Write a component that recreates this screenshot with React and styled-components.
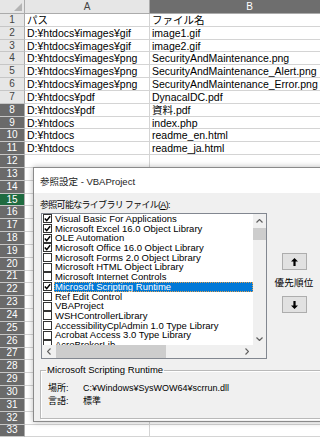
import React from "react";
import styled, { createGlobalStyle, css } from "styled-components";

const FONT = `"Liberation Sans", "Noto Sans CJK JP", sans-serif`;

const Global = createGlobalStyle`
  html, body { margin: 0; padding: 0; background: #fff; }
  body { font-family: ${FONT}; }
  * { box-sizing: border-box; }
`;

const Page = styled.div`
  position: relative;
  width: 320px;
  height: 439px;
  overflow: hidden;
  background: #fff;
`;

const Sheet = styled.div`
  display: grid;
  grid-template-columns: 25px 125px 200px;
  grid-template-rows: 14px;
  grid-auto-rows: 12.84px;
  width: 350px;
  font-family: ${FONT};
`;

const Corner = styled.div`
  position: relative;
  background: #e6e6e6;
  border-right: 1px solid #ababab;
  border-bottom: 1px solid #ababab;
  &::after {
    content: "";
    position: absolute;
    right: 2px;
    bottom: 2px;
    border-left: 8px solid transparent;
    border-bottom: 8px solid #b4b4b4;
  }
`;

const ColHead = styled.div`
  display: flex;
  align-items: center;
  justify-content: center;
  font-size: 10px;
  border-right: 1px solid #ababab;
  border-bottom: 1px solid #ababab;
  ${(p) =>
    p.$selected
      ? css`background: #6e6e6e; color: #fff;`
      : css`background: #e6e6e6; color: #444;`}
`;

const rowTones = {
  light: css`background: #e6e6e6; color: #444;`,
  dark: css`background: #6a6a6a; color: #fff;`,
  active: css`background: #1f6b40; color: #fff;`,
};

const RowHead = styled.div`
  display: flex;
  align-items: center;
  justify-content: center;
  font-size: 10px;
  line-height: 12px;
  border-right: 1px solid #ababab;
  border-bottom: 1px solid #c6c6c6;
  ${(p) => rowTones[p.$tone]}
`;

const Cell = styled.div`
  display: flex;
  align-items: center;
  padding-left: 2px;
  font-size: 10.5px;
  line-height: 12px;
  color: #000;
  white-space: nowrap;
  background: #fff;
  border-right: 1px solid #d4d4d4;
  border-bottom: 1px solid #d4d4d4;
`;

const Dialog = styled.div`
  position: absolute;
  left: 33px;
  top: 167px;
  width: 300px;
  display: flex;
  flex-direction: column;
  background: #f0f0f0;
  border: 1px solid #8a8a8a;
  box-shadow: 0 0 6px rgba(0, 0, 0, 0.28);
  font-family: ${FONT};
  color: #000;
`;

const TitleBar = styled.div`
  height: 25px;
  display: flex;
  align-items: center;
  padding-left: 6px;
  background: #fff;
  font-size: 9.5px;
  color: #222;
`;

const Body = styled.div`
  display: flex;
  flex-direction: column;
  padding: 6px 0 2px 7px;
`;

const Label = styled.div`
  height: 12px;
  line-height: 12px;
  font-size: 9px;
  letter-spacing: -0.7px;
  margin-left: -1px;
  u { text-decoration: underline; }
`;

const ListRow = styled.div`
  display: flex;
  margin-top: 2px;
`;

const ListBox = styled.div`
  width: 226px;
  height: 146px;
  border: 1px solid #828790;
  background: #fff;
  display: grid;
  grid-template-columns: 1fr 13px;
  grid-template-rows: 1fr 13px;
`;

const Items = styled.div`
  overflow: hidden;
  display: flex;
  flex-direction: column;
`;

const Item = styled.div`
  height: 9.7px;
  display: flex;
  align-items: center;
  padding-left: 1px;
`;

const Check = styled.span`
  flex: none;
  width: 9px;
  height: 9px;
  border: 1px solid #333;
  background: #fff;
  display: flex;
  align-items: center;
  justify-content: center;
`;

const ItemText = styled.span`
  flex: 1;
  margin-left: 2px;
  padding: 0 1px;
  height: 9.7px;
  line-height: 9.7px;
  font-size: 9.5px;
  white-space: nowrap;
  ${(p) =>
    p.$selected
      ? css`background: #0078d7; color: #fff; outline: 1px dotted #e0a050; outline-offset: -1px;`
      : css`color: #000;`}
`;

const VScroll = styled.div`
  background: #f0f0f0;
  display: flex;
  flex-direction: column;
`;

const HScroll = styled.div`
  background: #f0f0f0;
  display: flex;
  align-items: stretch;
`;

const ScrollCorner = styled.div`
  background: #f0f0f0;
`;

const ArrowBox = styled.div`
  flex: none;
  width: 13px;
  height: 13px;
  display: flex;
  align-items: center;
  justify-content: center;
`;

const VTrack = styled.div`
  flex: 1;
  padding-top: 1px;
`;

const VThumb = styled.div`
  width: 100%;
  height: 12px;
  background: #cdcdcd;
`;

const HTrack = styled.div`
  flex: 1;
  display: flex;
  align-items: center;
  padding-left: 1px;
`;

const HThumb = styled.div`
  width: 110px;
  height: 100%;
  background: #cdcdcd;
`;

const Side = styled.div`
  width: 42px;
  margin-left: 6px;
  padding-top: 40px;
  display: flex;
  flex-direction: column;
  align-items: center;
  gap: 7px;
`;

const MoveButton = styled.button`
  width: 25px;
  height: 17px;
  padding: 0;
  background: #e1e1e1;
  border: 1px solid #adadad;
  display: flex;
  align-items: center;
  justify-content: center;
  cursor: default;
`;

const SideLabel = styled.div`
  height: 12px;
  line-height: 12px;
  font-size: 9.5px;
  letter-spacing: 0.2px;
  white-space: nowrap;
`;

const Group = styled.fieldset`
  margin: 5px 0 0 -1px;
  padding: 5px 0 11px 5px;
  border: 1px solid #b9b9b9;
  box-shadow: inset 1px 1px 0 #fff, 1px 1px 0 #fff;
  min-width: 0;
  width: 300px;
`;

const Legend = styled.legend`
  padding: 0 1px;
  font-size: 9.5px;
  line-height: 12px;
  height: 12px;
`;

const InfoGrid = styled.div`
  display: grid;
  grid-template-columns: 35px 1fr;
  grid-auto-rows: 13px;
  align-items: center;
  font-size: 9px;
  padding-left: 2px;
  white-space: nowrap;
`;

const Chevron = ({ dir }) => {
  const pts = {
    up: "0.5,3.5 3.5,0.5 6.5,3.5",
    down: "0.5,0.5 3.5,3.5 6.5,0.5",
  };
  if (dir === "left" || dir === "right") {
    const p = dir === "left" ? "3.5,0.5 0.5,3.5 3.5,6.5" : "0.5,0.5 3.5,3.5 0.5,6.5";
    return (
      <svg width="4" height="7" viewBox="0 0 4 7">
        <polyline points={p} fill="none" stroke="#606060" strokeWidth="1.2" />
      </svg>
    );
  }
  return (
    <svg width="7" height="4" viewBox="0 0 7 4">
      <polyline points={pts[dir]} fill="none" stroke="#606060" strokeWidth="1.2" />
    </svg>
  );
};

const BigArrow = ({ down }) => (
  <svg width="7" height="8" viewBox="0 0 7 8" style={down ? { transform: "rotate(180deg)" } : undefined}>
    <path d="M3.5 0 L7 3.5 H4.6 V8 H2.4 V3.5 H0 Z" fill="#000" />
  </svg>
);

const CheckMark = () => (
  <svg width="7" height="7" viewBox="0 0 7 7">
    <polyline points="0.8,3.6 2.7,5.6 6.2,1.2" fill="none" stroke="#000" strokeWidth="1.5" />
  </svg>
);

const data = [
  ["パス", "ファイル名"],
  ["D:¥htdocs¥images¥gif", "image1.gif"],
  ["D:¥htdocs¥images¥gif", "image2.gif"],
  ["D:¥htdocs¥images¥png", "SecurityAndMaintenance.png"],
  ["D:¥htdocs¥images¥png", "SecurityAndMaintenance_Alert.png"],
  ["D:¥htdocs¥images¥png", "SecurityAndMaintenance_Error.png"],
  ["D:¥htdocs¥pdf", "DynacalDC.pdf"],
  ["D:¥htdocs¥pdf", "資料.pdf"],
  ["D:¥htdocs", "index.php"],
  ["D:¥htdocs", "readme_en.html"],
  ["D:¥htdocs", "readme_ja.html"],
];

const libs = [
  ["Visual Basic For Applications", true],
  ["Microsoft Excel 16.0 Object Library", true],
  ["OLE Automation", true],
  ["Microsoft Office 16.0 Object Library", true],
  ["Microsoft Forms 2.0 Object Library", false],
  ["Microsoft HTML Object Library", false],
  ["Microsoft Internet Controls", false],
  ["Microsoft Scripting Runtime", true, true],
  ["Ref Edit Control", false],
  ["VBAProject", false],
  ["WSHControllerLibrary", false],
  ["AccessibilityCplAdmin 1.0 Type Library", false],
  ["Acrobat Access 3.0 Type Library", false],
  ["AcroBrokerLib", false],
];

const toneFor = (n) => (n === 15 ? "active" : n <= 7 ? "light" : "dark");

export default function App() {
  const rows = [];
  for (let n = 1; n <= 33; n++) {
    const r = data[n - 1] || ["", ""];
    rows.push(
      <React.Fragment key={n}>
        <RowHead $tone={toneFor(n)}>{n}</RowHead>
        <Cell>{r[0]}</Cell>
        <Cell>{r[1]}</Cell>
      </React.Fragment>
    );
  }
  return (
    <Page>
      <Global />
      <Sheet>
        <Corner />
        <ColHead>A</ColHead>
        <ColHead $selected>B</ColHead>
        {rows}
      </Sheet>
      <Dialog>
        <TitleBar>参照設定 - VBAProject</TitleBar>
        <Body>
          <Label>
            参照可能なライブラリ ファイル(<u>A</u>):
          </Label>
          <ListRow>
            <ListBox>
              <Items>
                {libs.map(([name, checked, selected]) => (
                  <Item key={name}>
                    <Check>{checked && <CheckMark />}</Check>
                    <ItemText $selected={selected}>{name}</ItemText>
                  </Item>
                ))}
              </Items>
              <VScroll>
                <ArrowBox><Chevron dir="up" /></ArrowBox>
                <VTrack><VThumb /></VTrack>
                <ArrowBox><Chevron dir="down" /></ArrowBox>
              </VScroll>
              <HScroll>
                <ArrowBox><Chevron dir="left" /></ArrowBox>
                <HTrack><HThumb /></HTrack>
                <ArrowBox><Chevron dir="right" /></ArrowBox>
              </HScroll>
              <ScrollCorner />
            </ListBox>
            <Side>
              <MoveButton><BigArrow /></MoveButton>
              <SideLabel>優先順位</SideLabel>
              <MoveButton><BigArrow down /></MoveButton>
            </Side>
          </ListRow>
          <Group>
            <Legend>Microsoft Scripting Runtime</Legend>
            <InfoGrid>
              <span>場所:</span>
              <span>C:¥Windows¥SysWOW64¥scrrun.dll</span>
              <span>言語:</span>
              <span>標準</span>
            </InfoGrid>
          </Group>
        </Body>
      </Dialog>
    </Page>
  );
}
